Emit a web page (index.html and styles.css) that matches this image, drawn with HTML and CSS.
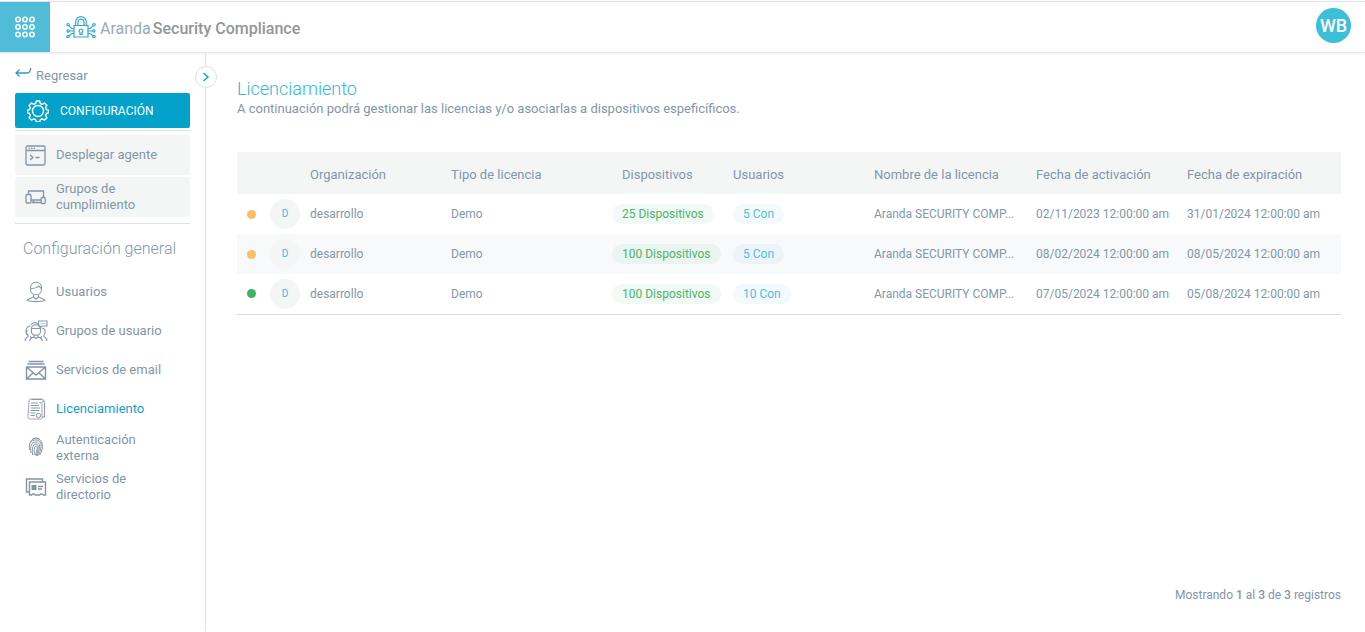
FILE: index.html
```html
<!DOCTYPE html>
<html lang="es">
  <head>
    <meta charset="UTF-8" />
    <meta name="viewport" content="width=device-width, initial-scale=1.0" />
    <title>Aranda Security Compliance</title>
    <link rel="stylesheet" href="styles.css">
  </head>
  <body>
    <header class="topbar">
      <button class="apps" aria-label="Aplicaciones">
        <svg width="20" height="22" viewBox="0 0 20 22" fill="none" stroke="#fff" stroke-width="1.5">
          <circle cx="3" cy="3.5" r="2.2" /><circle cx="10" cy="3.5" r="2.2" /><circle cx="17" cy="3.5" r="2.2" />
          <circle cx="3" cy="11" r="2.2" /><circle cx="10" cy="11" r="2.2" /><circle cx="17" cy="11" r="2.2" />
          <circle cx="3" cy="18.5" r="2.2" /><circle cx="10" cy="18.5" r="2.2" /><circle cx="17" cy="18.5" r="2.2" />
        </svg>
      </button>
      <a class="brand" href="#">
        <svg width="30" height="22" viewBox="0 0 30 22" fill="none" stroke="#35a9cb" stroke-width="1.2">
          <path d="M8 9.5h14v11.500H8z" />
          <path d="M9.700 9V6a5.300 5.300 0 0 1 10.600 0v3M12 9V6.200a3 3 0 0 1 6 0V9" />
          <path d="M14 16.500v2h2v-2a1.900 1.900 0 1 0-2 0z" />
          <path d="M8 12.500H5.500L3 9.700M8 15H3.500M8 17.500H5.500L3 20M22 12.500h2.500L27 9.700M22 15h4.500M22 17.500h2.500L27 20" />
          <circle cx="2" cy="8.700" r="1.200" /><circle cx="2.200" cy="15" r="1.200" /><circle cx="2" cy="20.500" r="1.200" />
          <circle cx="28" cy="8.700" r="1.200" /><circle cx="27.800" cy="15" r="1.200" /><circle cx="28" cy="20.500" r="1.200" />
        </svg>
        <span class="brand-name"><span>Aranda</span><b>Security Compliance</b></span>
      </a>
      <button class="user">WB</button>
    </header>

    <div class="layout">
      <aside class="sidebar">
        <button class="toggle" aria-label="Contraer">
          <svg width="8" height="10" viewBox="0 0 8 10" fill="none" stroke="#1a9fc6" stroke-width="1.500"><path d="M1.500 1l4.500 4-4.500 4" /></svg>
        </button>
        <a class="back" href="#">
          <svg width="17" height="12" viewBox="0 0 17 12" fill="none" stroke="#2a9fc4" stroke-width="1.300"><path d="M4.500 2.500L1 6l3.500 3.500M1 6h11q3.500 0 3.500-5" /></svg>
          Regresar
        </a>
        <a class="config" href="#">
          <svg width="22" height="22" viewBox="0 0 22 22" fill="none" stroke="#fff" stroke-width="1.400" stroke-linejoin="round">
            <path d="M9.300 1h3.400l.6 2.500 2 .8 2.200-1.300 2.400 2.400-1.300 2.200.8 2 2 .5v2.800l-2 .6-.8 2 1.300 2.200-2.400 2.400-2.200-1.300-2 .8-.6 2.400H9.300l-.6-2.400-2-.8-2.200 1.300-2.400-2.400 1.300-2.200-.8-2-2-.6v-2.800l2-.5.8-2-1.300-2.200 2.400-2.400 2.200 1.300 2-.8z" />
            <circle cx="11" cy="11" r="5.500" />
          </svg>
          CONFIGURACIÓN
        </a>
        <nav class="actions">
          <a href="#">
            <svg width="21" height="21" viewBox="0 0 21 21" fill="none" stroke="#8095aa" stroke-width="1.300">
              <rect x="1" y="1" width="19" height="19" rx="1.500" /><path d="M1 5.500h19M5 10l3 2.500L5 15M10.500 12.500h4" /><path d="M3.500 3.300h7" stroke-dasharray="1.500 1" />
            </svg>
            <span>Desplegar agente</span>
          </a>
          <a href="#">
            <svg width="21" height="21" viewBox="0 0 21 21" fill="none" stroke="#8095aa" stroke-width="1.300">
              <path d="M3.500 7.500V4h15v6.500M6 13h10M9 13l-1.500 2.500h8.500" /><rect x="1" y="7.500" width="5" height="8.500" rx="1" /><rect x="16.200" y="10.500" width="4" height="6" rx="1" />
            </svg>
            <span>Grupos de cumplimiento</span>
          </a>
        </nav>
        <h2>Configuración general</h2>
        <nav class="menu">
          <a href="#">
            <svg width="22" height="22" viewBox="0 0 22 22" fill="none" stroke="#8499aa" stroke-width="1.100">
              <path d="M5.500 6.500c0-7 11-7 11 0v2c0 7-11 7-11 0zM5.500 7.500c3 0 6.500-.5 8-2.500l3 2.500M8.500 13v2.500c0 2-6 1.500-6.500 4 4 1.500 14 1.500 18 0-.5-2.500-6.500-2-6.500-4V13M8.500 16l2.500 2 2.500-2" />
            </svg>
            <span>Usuarios</span>
          </a>
          <a href="#">
            <svg width="24" height="22" viewBox="0 0 24 22" fill="none" stroke="#8499aa" stroke-width="1.100">
              <path d="M14.500 1h8.500v5h-5l-2 1.500V6h-1.500zM16.500 3.500h1M18.500 3.500h1M20.500 3.500h1" />
              <path d="M7.500 8.500c0-5 9-5 9 0v3c0 5-9 5-9 0zM7.500 8.500h9M7 5C9 2 12 2 14 4M6.500 6C1 6 1 14 4.500 16M17.500 8c5 0 4 6 2 8M3 10l-1 3 2 2M10 15v1.500c-1 1.500-4 1-4.500 4.500M14 15v1.500c1 1.500 4 1 4.500 4.500M1 21q0-3 3.500-4.500M23 21q0-3-3.500-4.500M10 17l2 1.500 2-1.500M6 16.500l1.500 1M18 16.500l-1.500 1" />
            </svg>
            <span>Grupos de usuario</span>
          </a>
          <a href="#">
            <svg width="21" height="20" viewBox="0 0 21 20" fill="none" stroke="#8095aa" stroke-width="1.400">
              <path d="M3 1.500h15M2 4h17M1 7h19v12H1zM1 7l9.500 8L20 7M1 19l6.500-6M20 19l-6.500-6" />
            </svg>
            <span>Servicios de email</span>
          </a>
          <a class="active" href="#">
            <svg width="19" height="22" viewBox="0 0 19 22" fill="none" stroke="#7f9cb8" stroke-width="1">
              <path d="M15.500 6v13.500q0 1.500-1.500 1.500H3q-2 0-1.500-2.500L2.500 3Q2.500 1 4.500 1H16" stroke="#c497ad" />
              <path d="M5 1.500h10q3 0 3 3V19h-2.500M4.500 5h7M4.500 7.500h8M4.500 10h9M4 12.500h9M4 15h5M4 17.500h4" />
              <circle cx="12" cy="17.500" r="2.200" /><path d="M13 4l1.500 1.500L17 3" stroke="#48a9ca" />
            </svg>
            <span>Licenciamiento</span>
          </a>
          <a href="#">
            <svg width="16" height="21" viewBox="0 0 16 21" fill="none" stroke="#8b979f" stroke-width="1">
              <path d="M2 6C4-.5 12-.5 14 6c1 5 0 9-2.500 12M1.500 13C.5 6 3 3 8 3s6 5 4.500 10c-.5 2-1.500 4-3 6M3 16C2 9 3 5 8 5s4 7 1 14M4.500 18C4 12 4.500 7 8 7s2.500 6 0 12M6.500 18C6 14 6 9 8 9s1 4-.5 9M4 2.500Q8-.5 12 2.500" />
            </svg>
            <span>Autenticación externa</span>
          </a>
          <a href="#">
            <svg width="21" height="18" viewBox="0 0 21 18" fill="none" stroke="#8095aa" stroke-width="1.400">
              <path d="M4 14H1V1h16v3M4 4h16v13h-2q-2-2-4 0h-4q-2-2-4 0H4zM12.500 8.500h5M12.500 11h4" /><path d="M6 7h5v5H6z" fill="#8095aa" stroke="none" />
            </svg>
            <span>Servicios de directorio</span>
          </a>
        </nav>
      </aside>

      <main class="content">
        <h1>Licenciamiento</h1>
        <p class="intro">A continuación podrá gestionar las licencias y/o asociarlas a dispositivos espeficíficos.</p>
        <table class="licenses">
          <colgroup>
            <col class="c-status"><col class="c-avatar"><col class="c-org"><col class="c-type"><col class="c-dev">
            <col class="c-org"><col class="c-name"><col class="c-start"><col class="c-end">
          </colgroup>
          <thead>
            <tr>
              <th></th>
              <th></th>
              <th>Organización</th>
              <th>Tipo de licencia</th>
              <th class="devices">Dispositivos</th>
              <th>Usuarios</th>
              <th>Nombre de la licencia</th>
              <th>Fecha de activación</th>
              <th>Fecha de expiración</th>
            </tr>
          </thead>
          <tbody>
            <tr>
              <td><span class="dot"></span></td>
              <td><span class="avatar">D</span></td>
              <td>desarrollo</td>
              <td>Demo</td>
              <td><span class="pill green">25 Dispositivos</span></td>
              <td><span class="pill blue">5 Con</span></td>
              <td>Aranda SECURITY COMP...</td>
              <td>02/11/2023 12:00:00 am</td>
              <td>31/01/2024 12:00:00 am</td>
            </tr>
            <tr>
              <td><span class="dot"></span></td>
              <td><span class="avatar">D</span></td>
              <td>desarrollo</td>
              <td>Demo</td>
              <td><span class="pill green">100 Dispositivos</span></td>
              <td><span class="pill blue">5 Con</span></td>
              <td>Aranda SECURITY COMP...</td>
              <td>08/02/2024 12:00:00 am</td>
              <td>08/05/2024 12:00:00 am</td>
            </tr>
            <tr>
              <td><span class="dot ok"></span></td>
              <td><span class="avatar">D</span></td>
              <td>desarrollo</td>
              <td>Demo</td>
              <td><span class="pill green">100 Dispositivos</span></td>
              <td><span class="pill blue">10 Con</span></td>
              <td>Aranda SECURITY COMP...</td>
              <td>07/05/2024 12:00:00 am</td>
              <td>05/08/2024 12:00:00 am</td>
            </tr>
          </tbody>
        </table>
        <p class="count">Mostrando <b>1</b> al <b>3</b> de <b>3</b> registros</p>
      </main>
    </div>
  </body>
</html>
```
FILE: styles.css
```css
* {
  box-sizing: border-box;
}

body {
  margin: 0;
  padding: 1px 0;
  min-height: 100vh;
  display: flex;
  flex-direction: column;
  font-family: Roboto, "Liberation Sans", sans-serif;
  font-size: 13px;
  line-height: 16px;
  color: #8297a8;
  background-color: #fff;
}

a {
  color: inherit;
  text-decoration: none;
}

button {
  font-family: inherit;
  border: none;
  padding: 0;
  cursor: pointer;
}

svg {
  display: block;
  flex-shrink: 0;
}

h1, h2, p {
  margin: 0;
  font-weight: 400;
}

/* top bar */
.topbar {
  display: flex;
  align-items: center;
  height: 52px;
  border-top: 1px solid #dfe3e5;
  border-bottom: 1px solid #e4e8ec;
  box-shadow: 0 1px 2px rgba(130, 150, 180, 0.12);
}

.apps {
  display: flex;
  align-items: center;
  justify-content: center;
  width: 50px;
  height: 50px;
  background-color: #50bcd8;
}

.brand {
  display: flex;
  align-items: center;
  gap: 4px;
  margin-left: 16px;
}

.brand-name {
  display: flex;
  gap: 2px;
  padding-top: 3px;
  font-size: 16px;
  line-height: 20px;
  color: #9cabb5;
}

.brand-name b {
  font-weight: 500;
  color: #929698;
}

.user {
  width: 35px;
  height: 35px;
  margin: 0 14px 4px auto;
  border-radius: 50%;
  background-color: #3dbfd9;
  color: #fff;
  font-size: 18px;
  font-weight: 500;
}

.layout {
  flex: 1;
  display: flex;
}

/* sidebar */
.sidebar {
  position: relative;
  width: 206px;
  flex-shrink: 0;
  padding: 14px 15px 0;
  border-right: 1px solid #dfe1e4;
}

.toggle {
  position: absolute;
  top: 13px;
  right: -12px;
  display: flex;
  align-items: center;
  justify-content: center;
  width: 22px;
  height: 22px;
  border: 1px solid #dfe1e4;
  border-radius: 50%;
  background-color: #fff;
}

.back {
  display: flex;
  gap: 4px;
  line-height: 18px;
}

.config {
  display: flex;
  align-items: center;
  gap: 11px;
  height: 35px;
  margin-top: 8px;
  padding: 0 12px;
  border-radius: 2px;
  background-color: #04a2ca;
  color: #fff;
  font-size: 12px;
}

.actions {
  display: flex;
  flex-direction: column;
  gap: 2px;
  margin-top: 2px;
  padding: 4px 0 6px;
  border-top: 1px solid #dfe1e4;
  border-bottom: 1px solid #dfe1e4;
}

.actions a,
.menu a {
  display: flex;
  align-items: center;
  gap: 10px;
  padding: 0 20px 0 10px;
}

.actions a {
  height: 40px;
  border-radius: 2px;
  background-color: #f4f6f6;
}

.sidebar h2 {
  margin: 15px 0 13px 8px;
  font-size: 16px;
  line-height: 20px;
  font-weight: 300;
}

.menu a {
  height: 39px;
  gap: 8px;
  padding-left: 9px;
}

.menu svg {
  width: 24px;
}

.menu .active {
  color: #149fc6;
}

/* content */
.content {
  flex: 1;
  min-width: 0;
  display: flex;
  flex-direction: column;
  padding: 25px 24px 27px 31px;
}

.content h1 {
  font-size: 18px;
  line-height: 22px;
  font-weight: 300;
  color: #30b8d6;
}

.intro {
  font-size: 13px;
  line-height: 18px;
}

.licenses {
  width: 100%;
  margin-top: 34px;
  table-layout: fixed;
  border-collapse: collapse;
  border-bottom: 1px solid #d9dde3;
}

.c-status { width: 28px; }
.c-avatar { width: 40px; }
.c-org { width: 141px; }
.c-type { width: 161px; }
.c-dev { width: 121px; }
.c-name { width: 162px; }
.c-start { width: 151px; }
.c-end { width: 159px; }

.licenses th,
.licenses td {
  padding: 0 5px;
  text-align: left;
  white-space: nowrap;
}

.licenses th {
  height: 42px;
  padding-top: 3px;
  font-weight: 400;
  background-color: #f4f6f6;
}

.licenses .devices {
  padding-left: 15px;
}

.licenses td {
  height: 40px;
  font-size: 12px;
}

.licenses tbody tr:nth-child(even) {
  background-color: #f8f9fb;
}

.dot {
  display: block;
  width: 9px;
  height: 9px;
  margin-left: 5px;
  border-radius: 50%;
  background-color: #fdbe62;
}

.dot.ok {
  background-color: #3cb563;
}

.avatar {
  display: block;
  width: 30px;
  border-radius: 50%;
  background-color: #f4f6f6;
  color: #42bdd9;
  font-size: 10px;
  line-height: 30px;
  text-align: center;
}

.pill {
  display: inline-block;
  padding: 0 10px;
  border-radius: 10px;
  line-height: 20px;
}

.green {
  color: #4db26e;
  background-color: rgba(60, 181, 99, 0.07);
}

.blue {
  color: #58bad8;
  background-color: rgba(66, 189, 230, 0.07);
}

.count {
  margin-top: auto;
  font-size: 12px;
  line-height: 18px;
  text-align: right;
}

.count b {
  font-weight: 500;
}
```
